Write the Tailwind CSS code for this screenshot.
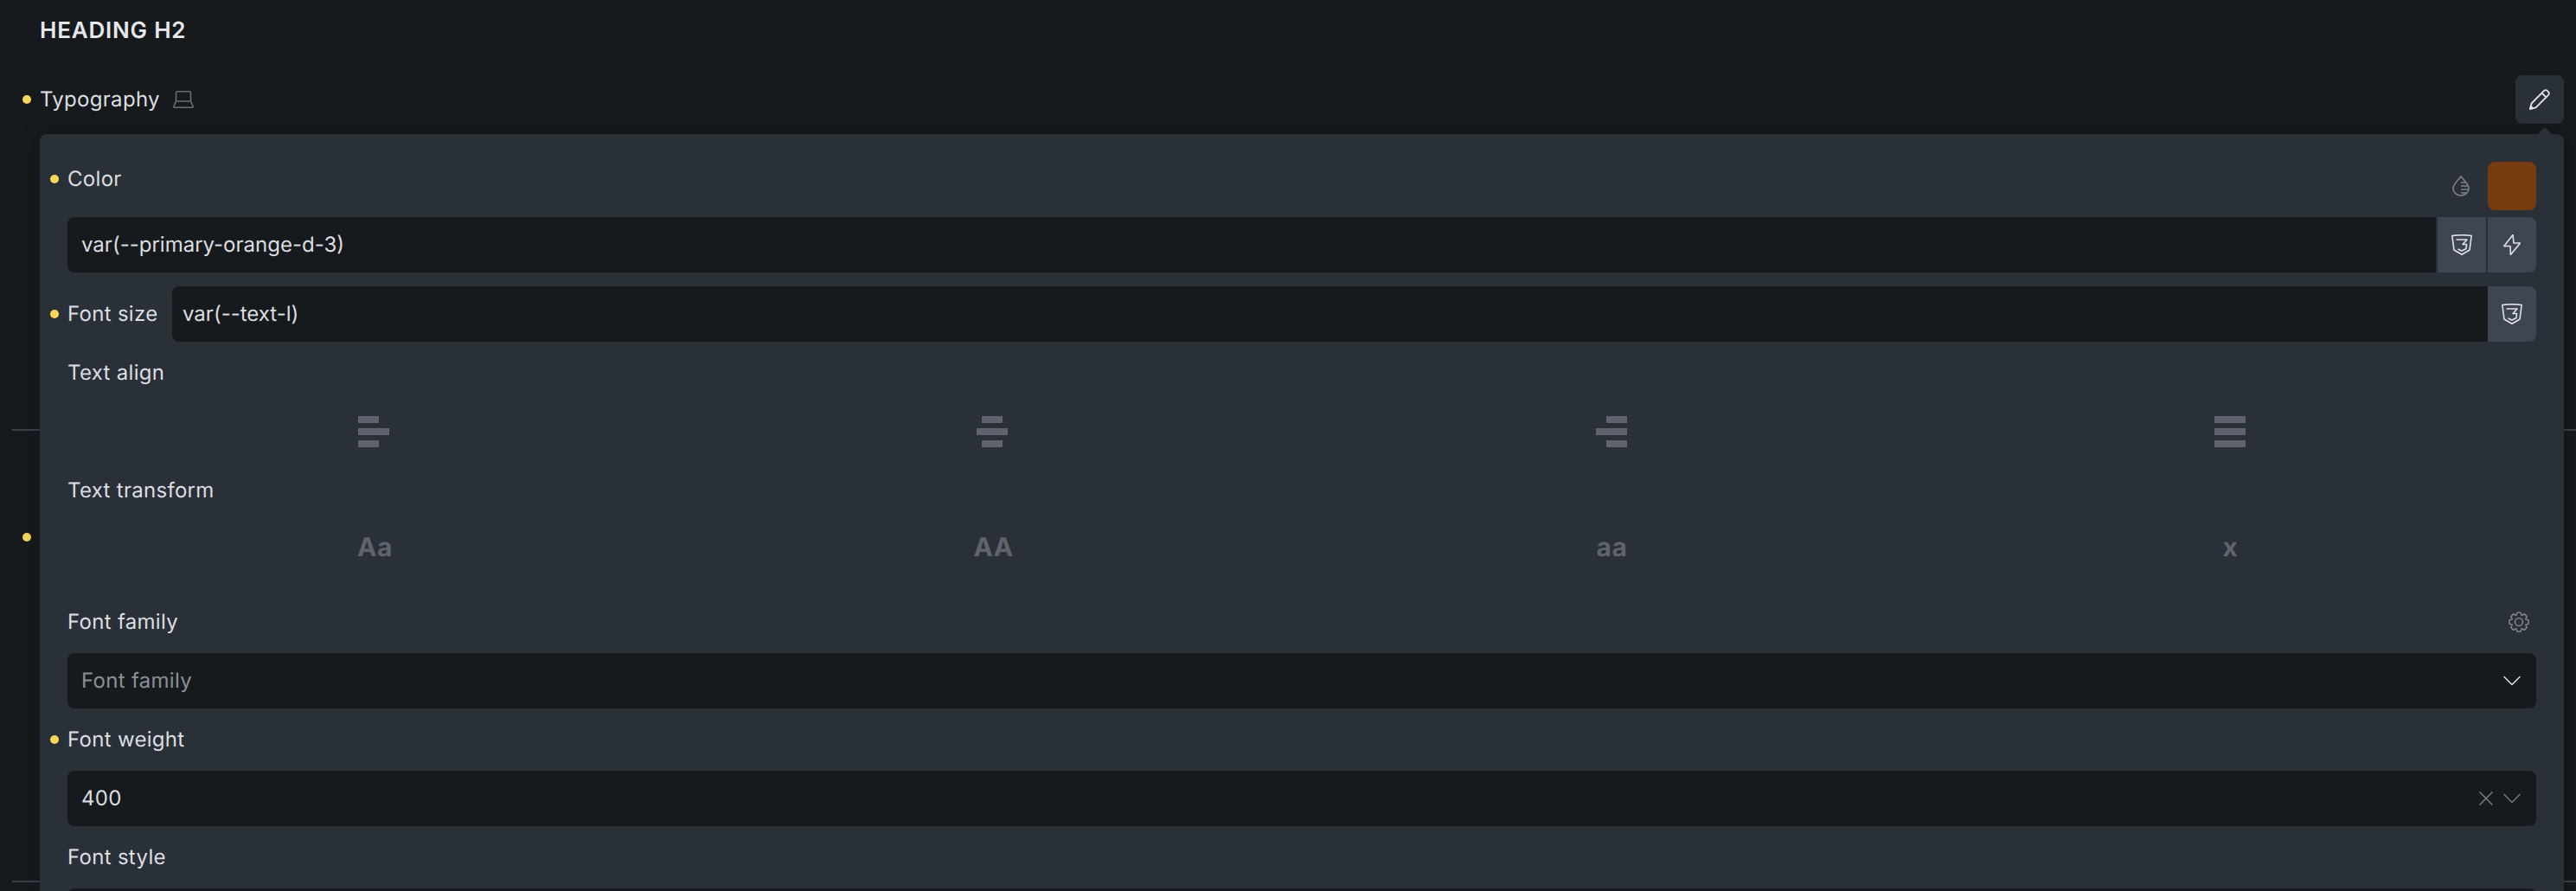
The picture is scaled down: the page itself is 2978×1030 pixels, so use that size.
<!DOCTYPE html>
<html lang="en">
<head>
    <meta charset="UTF-8">
    <title>Heading H2 - Typography</title>
    <script src="https://cdn.jsdelivr.net/npm/@tailwindcss/browser@4"></script>
</head>
<body class="bg-[#171a1d] font-['Inter',sans-serif] text-[24px] tracking-[0.3px] text-[#dcdee1] overflow-hidden antialiased [text-rendering:geometricPrecision]">
    <div class="relative h-[1030px] overflow-hidden pl-[14px]">
        <!-- Settings behind the popup -->
        <section class="h-[498px] border-b-2 border-[#3c414b]">
            <h2 class="h-[70px] pl-8 flex items-center text-[26px] tracking-[0.8px] font-semibold uppercase text-[#e6e8ea]">Heading H2</h2>
            <div class="relative h-[90px] pl-8 pr-[14px] flex items-center justify-between">
                <span class="absolute left-3 top-1/2 -translate-y-1/2 w-2.5 h-2.5 rounded-full bg-[#fad75a]"></span>
                <div class="flex items-center gap-[15px]">
                    <span>Typography</span>
                    <svg class="w-6 h-5" viewBox="0 0 24 20" fill="none" stroke="#6a6f78" stroke-width="1.5" stroke-linejoin="round"><path d="M3.5 12V2.5a1.7 1.7 0 0 1 1.7-1.7h13.6a1.7 1.7 0 0 1 1.7 1.7V12"/><path d="M3.5 12h17l2.7 6a.9.9 0 0 1-.8 1.2H1.600a.9.9 0 0 1-.8-1.200z"/></svg>
                </div>
                <button class="relative w-14 h-14 rounded-lg bg-[#2a3037] flex items-center justify-center">
                    <svg class="w-6 h-6" viewBox="0 0 24 24" fill="none" stroke="#e0e2e5" stroke-width="1.8" stroke-linejoin="round"><path d="M1 23l1.600-6.500L16.800 2.200a3 3 0 0 1 4.200 0l.8.8a3 3 0 0 1 0 4.200L7.500 21.400z"/><path d="M14.500 4.500l5 5"/><path d="M1 23l.8-3.200 2.400 2.400z" fill="#e0e2e5"/></svg>
                </button>
            </div>
        </section>
        <section class="relative h-[522px] border-b-2 border-[#3c414b]">
            <span class="absolute left-3 top-[118px] w-2.5 h-2.5 rounded-full bg-[#fad75a]"></span>
        </section>

        <!-- Typography popup -->
        <div class="absolute left-[46px] right-[14px] top-[155px] h-[1000px] rounded-t-lg bg-[#2a3037] shadow-[0_0_24px_rgba(0,0,0,0.25)] pl-8 pr-8 pt-8 flex flex-col gap-4">
            <span class="absolute right-[14px] -top-2 w-0 h-0 border-x-8 border-x-transparent border-b-8 border-b-[#2a3037]"></span>

            <div class="flex flex-col gap-2">
                <div class="flex justify-between h-14">
                    <label class="relative h-[39px] flex items-center">
                        <span class="absolute -left-5 top-1/2 -translate-y-1/2 w-2.5 h-2.5 rounded-full bg-[#fad75a]"></span>
                        Color
                    </label>
                    <div class="flex items-center gap-[21px]">
                        <svg class="w-5 h-6" viewBox="0 0 20 24" fill="none" stroke="#7c818a" stroke-width="1.6"><path d="M10 1l5.500 6.500c3 3.500 3.500 6 3.500 7.500a9 8 0 0 1-18 0c0-1.500.5-4 3.500-7.500z"/><path d="M10 8h5M10 12h8.500M10 16h9M10 20h6" stroke-width="1.500"/></svg>
                        <div class="w-14 h-14 rounded-lg bg-[#783a0f]"></div>
                    </div>
                </div>
                <div class="flex h-16 gap-0.5">
                    <div class="flex-1 rounded-l-lg bg-[#171a1d] px-4 flex items-center tracking-normal">var(--primary-orange-d-3)</div>
                    <button class="w-14 bg-[#3f4653] flex items-center justify-center">
                        <svg class="w-6 h-6" viewBox="0 0 24 24" fill="none" stroke="#e0e2e5" stroke-width="1.600" stroke-linejoin="round"><path d="M.8 1.500c7.500-1 15-1 22.400 0L21 18l-9 5.200L3 18z"/><path d="M5.500 6H18l-5 5.500h4.500l-.5 5L12 19l-4.500-2"/></svg>
                    </button>
                    <button class="w-14 rounded-r-lg bg-[#3f4653] flex items-center justify-center">
                        <svg class="w-5 h-6" viewBox="0 0 20 24" fill="none" stroke="#e0e2e5" stroke-width="1.600" stroke-linejoin="round"><path d="M11 .5L.8 13.500H8L8.400 23.500 19.500 10H12z"/></svg>
                    </button>
                </div>
            </div>

            <div class="flex items-center h-16">
                <label class="relative w-[121px]">
                    <span class="absolute -left-5 top-1/2 -translate-y-1/2 w-2.5 h-2.5 rounded-full bg-[#fad75a]"></span>
                    Font size
                </label>
                <div class="flex-1 h-full rounded-l-lg bg-[#171a1d] px-3 flex items-center tracking-normal">var(--text-l)</div>
                <button class="w-14 h-full rounded-r-lg bg-[#3f4653] flex items-center justify-center">
                    <svg class="w-6 h-6" viewBox="0 0 24 24" fill="none" stroke="#e0e2e5" stroke-width="1.600" stroke-linejoin="round"><path d="M.8 1.500c7.500-1 15-1 22.400 0L21 18l-9 5.200L3 18z"/><path d="M5.500 6H18l-5 5.500h4.500l-.5 5L12 19l-4.500-2"/></svg>
                </button>
            </div>

            <label class="h-10 flex items-center">Text align</label>
            <div class="grid grid-cols-4 h-16 w-[2862px] -ml-1">
                <div class="flex flex-col items-start justify-center gap-1.5 w-9 mx-auto"><i class="block h-2 w-6 bg-[#5e636d]"></i><i class="block h-2 w-9 bg-[#5e636d]"></i><i class="block h-2 w-6 bg-[#5e636d]"></i></div>
                <div class="flex flex-col items-center justify-center gap-1.5 w-9 mx-auto"><i class="block h-2 w-6 bg-[#5e636d]"></i><i class="block h-2 w-9 bg-[#5e636d]"></i><i class="block h-2 w-6 bg-[#5e636d]"></i></div>
                <div class="flex flex-col items-end justify-center gap-1.5 w-9 mx-auto"><i class="block h-2 w-6 bg-[#5e636d]"></i><i class="block h-2 w-9 bg-[#5e636d]"></i><i class="block h-2 w-6 bg-[#5e636d]"></i></div>
                <div class="flex flex-col items-center justify-center gap-1.5 w-9 mx-auto"><i class="block h-2 w-9 bg-[#5e636d]"></i><i class="block h-2 w-9 bg-[#5e636d]"></i><i class="block h-2 w-9 bg-[#5e636d]"></i></div>
            </div>

            <label class="h-10 flex items-center">Text transform</label>
            <div class="grid grid-cols-4 h-16 w-[2862px] -ml-1 -mt-0.5 pl-0.5 text-[30px] tracking-[0.5px] font-bold text-[#5e636d] text-center leading-[64px]">
                <span>Aa</span><span>AA</span><span>aa</span><span>x</span>
            </div>

            <div class="mt-[18px] flex flex-col">
                <div class="flex items-center justify-between h-10 mb-4 pr-2">
                    <label>Font family</label>
                    <svg class="w-6 h-6" viewBox="0 0 24 24" fill="none" stroke="#7c818a" stroke-width="1.600" stroke-linejoin="round"><circle cx="12" cy="12" r="4.500"/><path d="M10.050.97L13.950.97 15.210 4.240 18.420 2.820 21.180 5.580 19.760 8.790 23.030 10.050 23.030 13.950 19.760 15.210 21.180 18.420 18.420 21.180 15.210 19.760 13.950 23.030 10.050 23.030 8.790 19.760 5.580 21.180 2.820 18.420 4.240 15.210.97 13.950.97 10.050 4.240 8.790 2.820 5.580 5.580 2.820 8.790 4.240Z"/></svg>
                </div>
                <div class="h-16 rounded-lg bg-[#171a1d] pl-4 pr-[18px] flex items-center justify-between text-[#8c9096]">
                    Font family
                    <svg class="w-5 h-3" viewBox="0 0 20 12" fill="none" stroke="#e0e2e5" stroke-width="1.500"><path d="M.5 1L10 10.500 19.500 1"/></svg>
                </div>
            </div>

            <div class="flex flex-col">
                <label class="relative h-10 mb-4 flex items-center">
                    <span class="absolute -left-5 top-1/2 -translate-y-1/2 w-2.5 h-2.5 rounded-full bg-[#fad75a]"></span>
                    Font weight
                </label>
                <div class="h-16 rounded-lg bg-[#171a1d] pl-4 pr-[18px] flex items-center justify-between">
                    400
                    <div class="flex items-center gap-3">
                        <svg class="w-4 h-4" viewBox="0 0 16 16" fill="none" stroke="#777b82" stroke-width="1.500"><path d="M.5.500l15 15M15.500.500l-15 15"/></svg>
                        <svg class="w-5 h-3" viewBox="0 0 20 12" fill="none" stroke="#777b82" stroke-width="1.500"><path d="M.5 1L10 10.500 19.500 1"/></svg>
                    </div>
                </div>
            </div>

            <div class="flex flex-col">
                <label class="h-10 mb-4 flex items-center">Font style</label>
                <div class="h-16 rounded-lg bg-[#171a1d]"></div>
            </div>
        </div>
    </div>
</body>
</html>
